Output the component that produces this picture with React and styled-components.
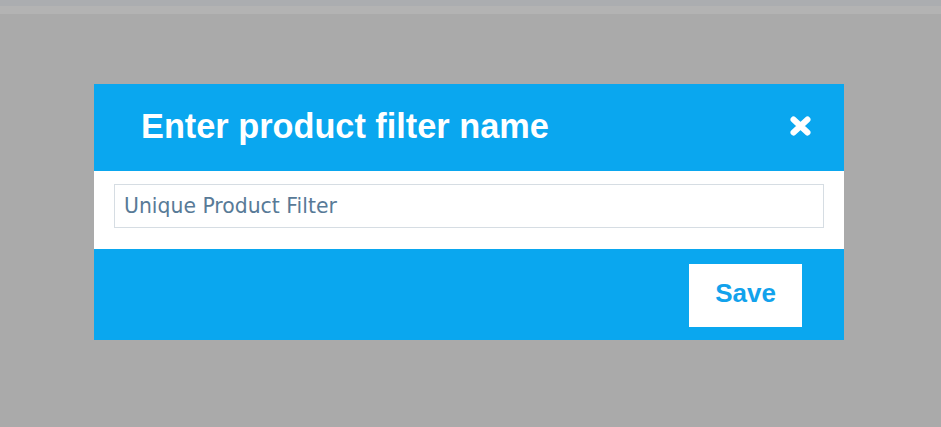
import React from 'react';
import styled, { createGlobalStyle } from 'styled-components';

const GlobalStyle = createGlobalStyle`
  html, body {
    margin: 0;
    padding: 0;
    background: #aaaaaa;
    height: 100%;
  }
  body {
    font-family: "Liberation Sans", Arial, sans-serif;
  }
`;

const Page = styled.div`
  min-height: 427px;
  background: #aaaaaa;
`;

const TopBar = styled.div`
  height: 6px;
  background: #abadb0;
  border-bottom: 8px solid #b3b3b3;
`;

const Modal = styled.div`
  width: 750px;
  margin: 70px 0 0 94px;
  display: flex;
  flex-direction: column;
`;

const Header = styled.div`
  height: 87px;
  background: #0aa7ef;
  display: flex;
  align-items: center;
  justify-content: space-between;
  padding: 0 32px 0 47px;
  box-sizing: border-box;
`;

const Title = styled.h2`
  margin: 0;
  color: #ffffff;
  font-family: "Liberation Sans", Arial, sans-serif;
  font-weight: bold;
  font-size: 34.3px;
  line-height: 1;
  position: relative;
  top: -1px;
`;

const CloseButton = styled.button`
  border: 0;
  background: none;
  padding: 0;
  width: 23px;
  height: 22px;
  display: flex;
  align-items: center;
  justify-content: center;
  cursor: pointer;
  position: relative;
  top: -2px;
`;

const Body = styled.div`
  height: 78px;
  background: #ffffff;
  padding: 13px 20px 0;
  box-sizing: border-box;
`;

const Input = styled.input`
  width: 100%;
  height: 44px;
  box-sizing: border-box;
  border: 1px solid #d6dde3;
  outline: none;
  padding: 0 9px;
  font-family: "DejaVu Sans", Verdana, sans-serif;
  font-size: 20.4px;
  color: #587a97;
  caret-color: #33475a;
`;

const Footer = styled.div`
  height: 91px;
  background: #0aa7ef;
  display: flex;
  justify-content: flex-end;
  align-items: flex-start;
  padding: 15px 42px 0 0;
  box-sizing: border-box;
`;

const SaveButton = styled.button`
  width: 113px;
  height: 63px;
  border: 0;
  background: #ffffff;
  color: #12a2ec;
  font-family: "Liberation Sans", Arial, sans-serif;
  font-weight: bold;
  font-size: 26px;
  padding: 0 0 4px;
  cursor: pointer;
`;

const CloseIcon = () => (
  <svg width="23" height="22" viewBox="0 0 23 22">
    <path
      d="M4.5 4.5 L18.5 17.5 M18.5 4.5 L4.5 17.5"
      stroke="#ffffff"
      strokeWidth="6"
      strokeLinecap="round"
    />
  </svg>
);

export default function App() {
  return (
    <Page>
      <GlobalStyle />
      <TopBar />
      <Modal>
        <Header>
          <Title>Enter product filter name</Title>
          <CloseButton aria-label="Close">
            <CloseIcon />
          </CloseButton>
        </Header>
        <Body>
          <Input defaultValue="Unique Product Filter" autoFocus />
        </Body>
        <Footer>
          <SaveButton>Save</SaveButton>
        </Footer>
      </Modal>
    </Page>
  );
}
